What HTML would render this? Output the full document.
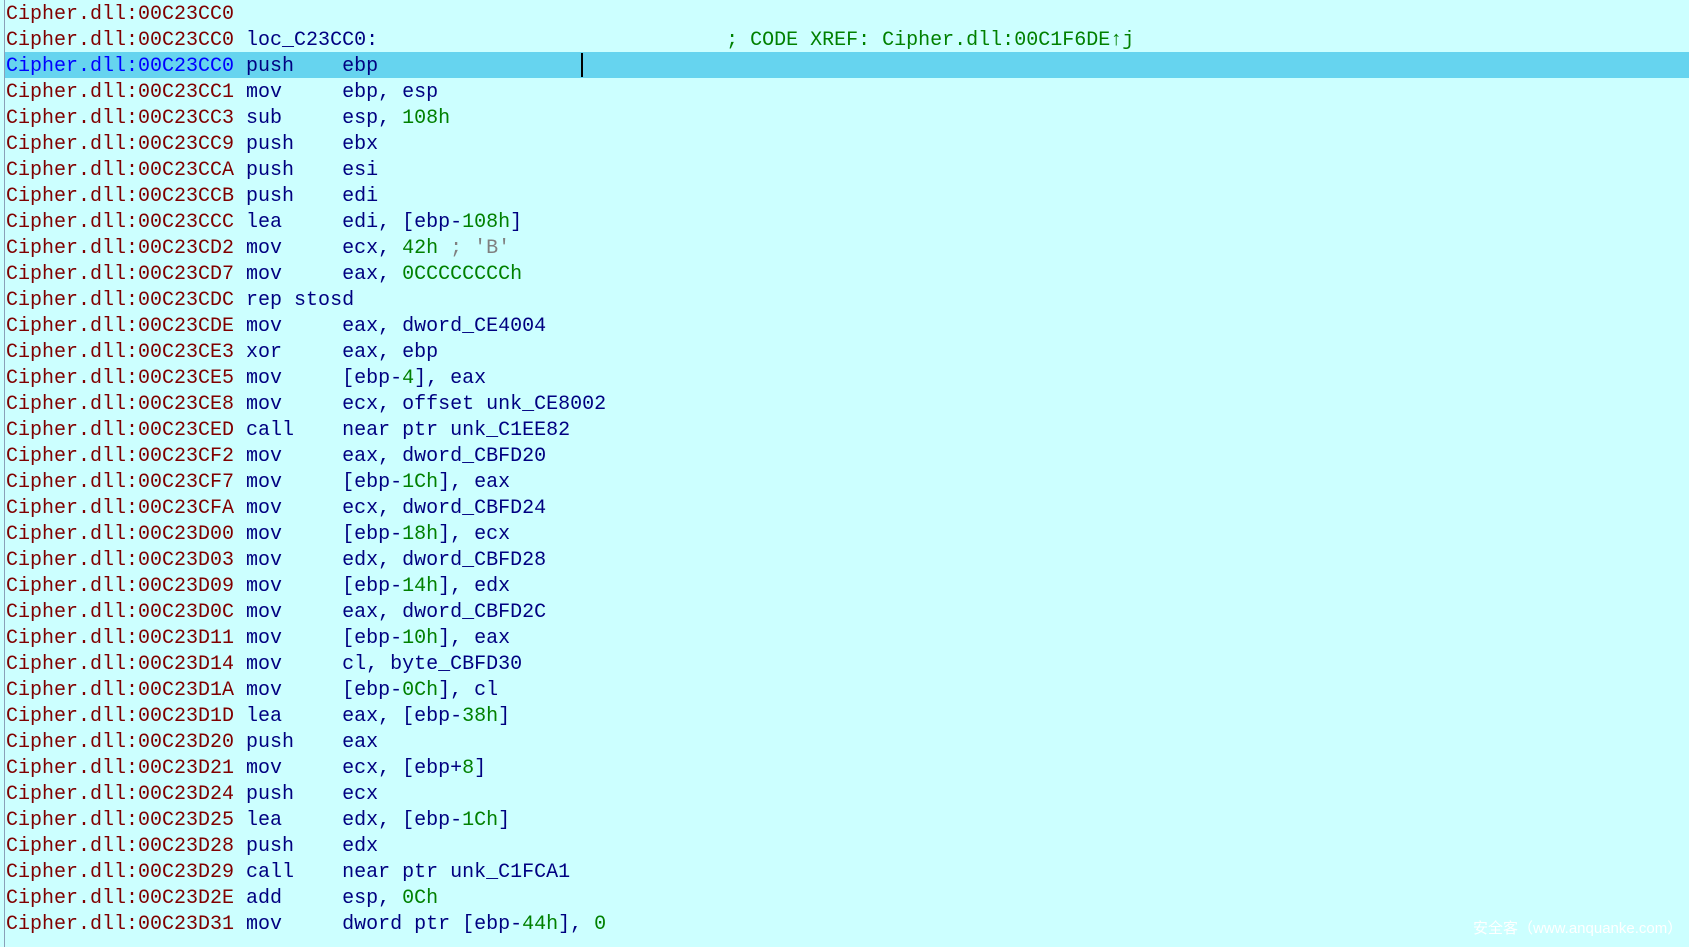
<!DOCTYPE html>
<html><head><meta charset="utf-8"><style>
html,body{margin:0;padding:0}
body{width:1689px;height:947px;background:#ccffff;position:relative;overflow:hidden;font-family:"Liberation Mono","DejaVu Sans Mono",monospace;font-size:20px}
.bar{position:absolute;left:4px;top:0;width:1px;height:947px;background:#8aa0b8}
.hl{position:absolute;left:5px;right:0;top:52px;height:26px;background:#66d4ef}
.cur{position:absolute;left:581px;top:53px;width:2px;height:24px;background:#000}
.r{position:absolute;left:6px;height:26px;line-height:26px;padding-top:2px;white-space:pre;color:#000080}
.a{color:#800000}.s{color:#0000ff}.g{color:#008000}.c{color:#808080}
.wm{position:absolute;left:1473px;top:917px;font-family:"Liberation Sans","Noto Sans CJK SC",sans-serif;font-size:15px;color:#fff}
</style></head><body>
<div class="bar"></div><div class="hl"></div><div class="cur"></div>
<div class="r" style="top:0"><span class="a">Cipher.dll:00C23CC0</span></div>
<div class="r" style="top:26px"><span class="a">Cipher.dll:00C23CC0</span> loc_C23CC0:                             <span class="g">; CODE XREF: Cipher.dll:00C1F6DE↑j</span></div>
<div class="r" style="top:52px"><span class="s">Cipher.dll:00C23CC0</span> push    ebp</div>
<div class="r" style="top:78px"><span class="a">Cipher.dll:00C23CC1</span> mov     ebp, esp</div>
<div class="r" style="top:104px"><span class="a">Cipher.dll:00C23CC3</span> sub     esp, <span class="g">108h</span></div>
<div class="r" style="top:130px"><span class="a">Cipher.dll:00C23CC9</span> push    ebx</div>
<div class="r" style="top:156px"><span class="a">Cipher.dll:00C23CCA</span> push    esi</div>
<div class="r" style="top:182px"><span class="a">Cipher.dll:00C23CCB</span> push    edi</div>
<div class="r" style="top:208px"><span class="a">Cipher.dll:00C23CCC</span> lea     edi, [ebp-<span class="g">108h</span>]</div>
<div class="r" style="top:234px"><span class="a">Cipher.dll:00C23CD2</span> mov     ecx, <span class="g">42h</span> <span class="c">; 'B'</span></div>
<div class="r" style="top:260px"><span class="a">Cipher.dll:00C23CD7</span> mov     eax, <span class="g">0CCCCCCCCh</span></div>
<div class="r" style="top:286px"><span class="a">Cipher.dll:00C23CDC</span> rep stosd</div>
<div class="r" style="top:312px"><span class="a">Cipher.dll:00C23CDE</span> mov     eax, dword_CE4004</div>
<div class="r" style="top:338px"><span class="a">Cipher.dll:00C23CE3</span> xor     eax, ebp</div>
<div class="r" style="top:364px"><span class="a">Cipher.dll:00C23CE5</span> mov     [ebp-<span class="g">4</span>], eax</div>
<div class="r" style="top:390px"><span class="a">Cipher.dll:00C23CE8</span> mov     ecx, offset unk_CE8002</div>
<div class="r" style="top:416px"><span class="a">Cipher.dll:00C23CED</span> call    near ptr unk_C1EE82</div>
<div class="r" style="top:442px"><span class="a">Cipher.dll:00C23CF2</span> mov     eax, dword_CBFD20</div>
<div class="r" style="top:468px"><span class="a">Cipher.dll:00C23CF7</span> mov     [ebp-<span class="g">1Ch</span>], eax</div>
<div class="r" style="top:494px"><span class="a">Cipher.dll:00C23CFA</span> mov     ecx, dword_CBFD24</div>
<div class="r" style="top:520px"><span class="a">Cipher.dll:00C23D00</span> mov     [ebp-<span class="g">18h</span>], ecx</div>
<div class="r" style="top:546px"><span class="a">Cipher.dll:00C23D03</span> mov     edx, dword_CBFD28</div>
<div class="r" style="top:572px"><span class="a">Cipher.dll:00C23D09</span> mov     [ebp-<span class="g">14h</span>], edx</div>
<div class="r" style="top:598px"><span class="a">Cipher.dll:00C23D0C</span> mov     eax, dword_CBFD2C</div>
<div class="r" style="top:624px"><span class="a">Cipher.dll:00C23D11</span> mov     [ebp-<span class="g">10h</span>], eax</div>
<div class="r" style="top:650px"><span class="a">Cipher.dll:00C23D14</span> mov     cl, byte_CBFD30</div>
<div class="r" style="top:676px"><span class="a">Cipher.dll:00C23D1A</span> mov     [ebp-<span class="g">0Ch</span>], cl</div>
<div class="r" style="top:702px"><span class="a">Cipher.dll:00C23D1D</span> lea     eax, [ebp-<span class="g">38h</span>]</div>
<div class="r" style="top:728px"><span class="a">Cipher.dll:00C23D20</span> push    eax</div>
<div class="r" style="top:754px"><span class="a">Cipher.dll:00C23D21</span> mov     ecx, [ebp+<span class="g">8</span>]</div>
<div class="r" style="top:780px"><span class="a">Cipher.dll:00C23D24</span> push    ecx</div>
<div class="r" style="top:806px"><span class="a">Cipher.dll:00C23D25</span> lea     edx, [ebp-<span class="g">1Ch</span>]</div>
<div class="r" style="top:832px"><span class="a">Cipher.dll:00C23D28</span> push    edx</div>
<div class="r" style="top:858px"><span class="a">Cipher.dll:00C23D29</span> call    near ptr unk_C1FCA1</div>
<div class="r" style="top:884px"><span class="a">Cipher.dll:00C23D2E</span> add     esp, <span class="g">0Ch</span></div>
<div class="r" style="top:910px"><span class="a">Cipher.dll:00C23D31</span> mov     dword ptr [ebp-<span class="g">44h</span>], <span class="g">0</span></div>
<div class="wm">安全客（www.anquanke.com）</div>
</body></html>
